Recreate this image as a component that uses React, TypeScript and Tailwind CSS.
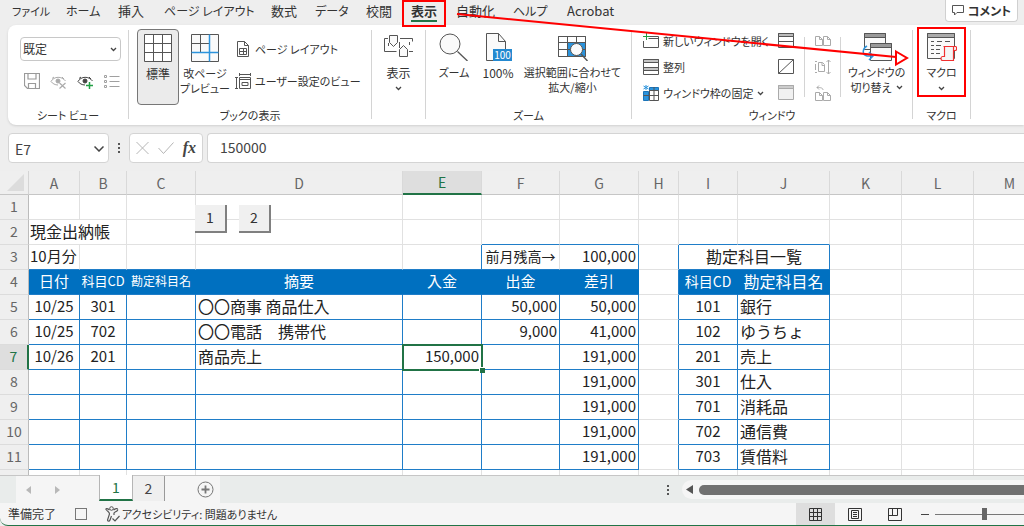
import type { ReactNode } from 'react';
import clsx from 'clsx';

interface Cell {
    text: string;
    className?: string;
    span?: number;
}

const menuTabs = [
    { label: 'ファイル', width: 'w-[54px] text-[11px]' },
    { label: 'ホーム', width: 'w-[52px] text-xs' },
    { label: '挿入', width: 'w-[46px] text-[13px]' },
    { label: 'ページ レイアウト', width: 'w-[107px] text-xs' },
    { label: '数式', width: 'w-[44px] text-[13px]' },
    { label: 'データ', width: 'w-[51px] text-xs' },
    { label: '校閲', width: 'w-[45px] text-[13px]' },
    { label: '表示', width: 'w-[45px] text-[13px]' },
    { label: '自動化', width: 'w-[57px] text-[13px]' },
    { label: 'ヘルプ', width: 'w-[54px] text-xs' },
    { label: 'Acrobat', width: 'w-[60px] text-[13px]' },
];

const columns = [
    { name: 'A', width: 'w-[51px]' },
    { name: 'B', width: 'w-[47px]' },
    { name: 'C', width: 'w-[69px]' },
    { name: 'D', width: 'w-[207px]' },
    { name: 'E', width: 'w-[79px]' },
    { name: 'F', width: 'w-[78px]' },
    { name: 'G', width: 'w-[79px]' },
    { name: 'H', width: 'w-[40px]' },
    { name: 'I', width: 'w-[59px]' },
    { name: 'J', width: 'w-[92px]' },
    { name: 'K', width: 'w-[72px]' },
    { name: 'L', width: 'w-[72px]' },
    { name: 'M', width: 'w-[72px]' },
];

const center = 'text-center text-[15px]';
const right = 'text-right text-[15px] pr-0.5';
const left = 'text-left text-base pl-0.5';
const head = 'text-center text-white text-[15px]';

const cells: Record<string, Cell> = {
    A2: { text: '現金出納帳', className: 'text-left text-base pl-px', span: 2 },
    A3: { text: '10月分', className: 'text-left text-[15px] pl-px' },
    F3: { text: '前月残高→', className: 'text-center text-sm' },
    G3: { text: '100,000', className: right },
    I3: { text: '勘定科目一覧', className: 'text-center text-base', span: 2 },
    A4: { text: '日付', className: head },
    B4: { text: '科目CD', className: 'text-center text-white text-[13px]' },
    C4: { text: '勘定科目名', className: 'text-center text-white text-xs' },
    D4: { text: '摘要', className: head },
    E4: { text: '入金', className: head },
    F4: { text: '出金', className: head },
    G4: { text: '差引', className: head },
    I4: { text: '科目CD', className: 'text-center text-white text-sm' },
    J4: { text: '勘定科目名', className: 'text-center text-white text-base' },
    A5: { text: '10/25', className: center },
    B5: { text: '301', className: center },
    D5: { text: '〇〇商事 商品仕入', className: left },
    F5: { text: '50,000', className: right },
    G5: { text: '50,000', className: right },
    A6: { text: '10/25', className: center },
    B6: { text: '702', className: center },
    D6: { text: '〇〇電話　携帯代', className: left },
    F6: { text: '9,000', className: right },
    G6: { text: '41,000', className: right },
    A7: { text: '10/26', className: center },
    B7: { text: '201', className: center },
    D7: { text: '商品売上', className: left },
    E7: { text: '150,000', className: right },
    G7: { text: '191,000', className: right },
    G8: { text: '191,000', className: right },
    G9: { text: '191,000', className: right },
    G10: { text: '191,000', className: right },
    G11: { text: '191,000', className: right },
};

const accounts = [
    ['101', '銀行'],
    ['102', 'ゆうちょ'],
    ['201', '売上'],
    ['301', '仕入'],
    ['701', '消耗品'],
    ['702', '通信費'],
    ['703', '賃借料'],
];

accounts.forEach(([code, name], i) => {
    cells[`I${i + 5}`] = { text: code, className: center };
    cells[`J${i + 5}`] = { text: name, className: left };
});

const inTables = (col: number) => col <= 6 || col === 8 || col === 9;

function cellBorder(row: number, col: number) {
    const rightBlue =
        (row >= 4 && row <= 11 && col <= 9) || (row === 3 && [4, 6, 7, 9].includes(col));
    const bottomBlue =
        (row >= 3 && row <= 11 && inTables(col)) || (row === 2 && [5, 6, 8, 9].includes(col));
    return clsx(
        rightBlue ? 'border-r-[#1f7dc8]' : 'border-r-[#e1e1e1]',
        bottomBlue ? 'border-b-[#1f7dc8]' : 'border-b-[#e1e1e1]',
    );
}

function Chevron({ className }: { className?: string }) {
    return (
        <svg width="7" height="5" viewBox="0 0 7 5" fill="none" stroke="#444" strokeWidth="1.3" className={clsx('shrink-0', className)}>
            <path d="M1 1l2.5 2.5L6 1" />
        </svg>
    );
}

function Icon({ w = 16, h = 16, color = '#555', className, children }: { w?: number; h?: number; color?: string; className?: string; children: ReactNode }) {
    return (
        <svg width={w} height={h} viewBox={`0 0 ${w} ${h}`} fill="none" stroke={color} className={clsx('shrink-0', className)}>
            {children}
        </svg>
    );
}

function Group({ label, width, children }: { label: string; width: string; children: ReactNode }) {
    return (
        <section className={clsx('flex shrink-0', width)}>
            <div className="flex min-w-0 grow flex-col">
                <div className="flex h-[76px]">{children}</div>
                <div className="h-5 text-center text-[11px] leading-5">{label}</div>
            </div>
            <div className="mb-1.5 mt-px w-px bg-[#d4d4d4]" />
        </section>
    );
}

function BigButton({ icon, lines, className, menu }: { icon: ReactNode; lines: string[]; className?: string; menu?: boolean }) {
    return (
        <button className={clsx('flex shrink-0 flex-col items-center gap-1 pt-1 leading-[15px]', className)}>
            {icon}
            <span className="flex flex-col items-center whitespace-nowrap">
                {lines.map((line) => (
                    <span key={line}>{line}</span>
                ))}
                {menu && <Chevron className="mt-1.5" />}
            </span>
        </button>
    );
}

function SmallButton({ icon, label, menu }: { icon: ReactNode; label: string; menu?: boolean }) {
    return (
        <button className="flex h-5 items-center gap-1 whitespace-nowrap text-[11px] leading-5">
            {icon}
            {label}
            {menu && <Chevron />}
        </button>
    );
}

function SheetViewGroup() {
    return (
        <Group label="シート ビュー" width="w-[121px]">
            <div className="flex grow flex-col gap-3 pl-3 pt-2">
                <div className="relative h-6 w-[101px]">
                    <select aria-label="シート ビュー" className="block h-full w-full appearance-none rounded border border-[#c8c8c8] bg-white pl-0.5 text-xs">
                        <option>既定</option>
                    </select>
                    <Chevron className="pointer-events-none absolute right-1 top-2.5" />
                </div>
                <div className="flex gap-2.5 pl-1">
                    <button aria-label="保持">
                        <Icon color="#9a9a9a">
                            <path d="M.5.5h15v15h-12l-3-3zM4 .5v5.500h8V.5M4.500 15.500v-5h7v5" strokeWidth="1.200" />
                        </Icon>
                    </button>
                    <button aria-label="終了">
                        <Icon w={17} color="#aaa">
                            <path d="M1 8.500C4 3 12 3 15.500 8M1 8.500c1.500 2 4 3.500 7 3.500M2 5.500l2-1.500M14 6l-2-2" />
                            <circle cx="8" cy="8" r="2" fill="#aaa" />
                            <path d="M9.500 10l6 5.500M15.500 10l-6 5.500" strokeWidth="1.200" />
                        </Icon>
                    </button>
                    <button aria-label="新規">
                        <Icon w={17} color="#444">
                            <path d="M1 8.500C4 3 12 3 15.500 8M1 8.500c1.500 2 4 3.500 7 3.500M2 5.500l2-1.500M14 6l-2-2" />
                            <circle cx="8" cy="8" r="2" fill="#444" />
                            <path d="M12.500 9v7M9 12.500h7" stroke="#22a045" strokeWidth="1.500" />
                        </Icon>
                    </button>
                    <button aria-label="オプション">
                        <Icon color="#a0a0a0">
                            <path d="M5.500 3.500h10M5.500 8.500h10M5.500 13.500h10" />
                            <path d="M.5 2.500h2v2h-2zM.5 7.500h2v2h-2zM.5 12.500h2v2h-2z" />
                        </Icon>
                    </button>
                </div>
            </div>
        </Group>
    );
}

function BookViewGroup() {
    return (
        <Group label="ブックの表示" width="w-[243px]">
            <div className="flex pl-2">
                <BigButton
                    className="w-[42px] rounded border border-[#777] bg-[#ebebeb] text-xs"
                    lines={['標準']}
                    icon={
                        <Icon w={28} h={28}>
                            <path d="M.5.5h27v27H.5z" fill="#fff" />
                            <path d="M9.500.5v27M18.500.5v27M.5 9.500h27M.5 18.500h27" />
                        </Icon>
                    }
                />
                <BigButton
                    className="w-[52px] border border-transparent text-[11px]"
                    lines={['改ページ', 'プレビュー']}
                    icon={
                        <Icon w={28} h={28}>
                            <path d="M.5.5h27v27H.5z" fill="#fafafa" />
                            <path d="M9.500.5v18M.5 9.500h18" />
                            <path d="M18.500.5v27M.5 18.500h27" stroke="#2b93dc" strokeWidth="1.500" />
                        </Icon>
                    }
                />
                <div className="flex flex-col gap-3 pl-1 pt-2.5">
                    <SmallButton
                        label="ページ レイアウト"
                        icon={
                            <Icon>
                                <path d="M2.500.5h7l4 4v11h-11zM9.500.5v4h4" />
                                <path d="M4.500 7.500h7v6h-7zM4.500 10.500h7M8.500 7.500v6" />
                            </Icon>
                        }
                    />
                    <SmallButton
                        label="ユーザー設定のビュー"
                        icon={
                            <Icon>
                                <path d="M4 1.500h12M4.500 0v3M15.500 0v3M1.500 4v12M0 4.500h3M0 15.500h3M4.500 4.500h11v11h-11zM4.500 6.500h11M7 9.500h6v3H7z" />
                            </Icon>
                        }
                    />
                </div>
            </div>
        </Group>
    );
}

function WindowGroup() {
    return (
        <Group label="ウィンドウ" width="w-[281px]">
            <div className="flex w-[132px] flex-col gap-1.5 pl-[11px] pt-0.5">
                <SmallButton
                    label="新しいウィンドウを開く"
                    icon={
                        <Icon>
                            <path d="M5.500 3.500h10v11H.5V8M5.500 5.500h10" />
                            <path d="M3.500 0v7M0 3.500h7" stroke="#22a045" />
                        </Icon>
                    }
                />
                <SmallButton
                    label="整列"
                    icon={
                        <Icon>
                            <path d="M.5.5h15v15H.5z" />
                            <path d="M.5.5h15v3H.5zM.5 8.500h15v3H.5z" fill="#c4c4c4" />
                        </Icon>
                    }
                />
                <SmallButton
                    label="ウィンドウ枠の固定"
                    menu
                    icon={
                        <Icon>
                            <path d="M6.500 2.500h9v3h-9zM.5 6.500h5v9h-5z" fill="#2b93dc" stroke="#1b74b8" />
                            <path d="M6.500 5.500h9v10h-9zM11 2v14M.5 10.500h15" />
                            <path d="M3 0v5M.5 1l5 3M5.500 1l-5 3" stroke="#2b93dc" />
                        </Icon>
                    }
                />
            </div>
            <div className="flex w-10 flex-col items-end gap-2.5 pr-[10px] pt-1">
                <button aria-label="分割">
                    <Icon>
                        <path d="M.5.5h15v14H.5z" />
                        <path d="M.5.5h15v3H.5z" fill="#bbb" />
                        <path d="M.5 8.500h15" />
                    </Icon>
                </button>
                <button aria-label="表示しない">
                    <Icon>
                        <path d="M.5.5h15v14H.5zM.5 14.500L15.500.5" />
                    </Icon>
                </button>
                <button aria-label="再表示">
                    <Icon color="#aaa">
                        <path d="M.5.5h15v14H.5z" fill="#f1f1f1" />
                        <path d="M.5.5h15v3H.5z" fill="#ccc" />
                    </Icon>
                </button>
            </div>
            <div className="my-2 w-px bg-[#d4d4d4]" />
            <div className="flex w-[35px] flex-col items-center gap-2.5 pt-1">
                <button aria-label="並べて比較">
                    <Icon color="#aaa">
                        <path d="M.5 3.500h4l3 3v6h-7zM8.500 3.500h4l3 3v6h-7zM4.500 3.500v3h3M12.500 3.500v3h3" />
                    </Icon>
                </button>
                <button aria-label="同時にスクロール">
                    <Icon color="#aaa">
                        <path d="M3.500 3.500h4l2 2v7h-6zM7 3.500v3h2.500M13.500 1v14M11.500 3l2-2 2 2M11.500 13l2 2 2-2M0 2.500h2M.5 5v6M0 13.500h2" />
                    </Icon>
                </button>
                <button aria-label="ウィンドウの位置を元に戻す">
                    <Icon color="#aaa">
                        <path d="M.5 7.500h4l3 3v5h-7zM8.500 7.500h4l3 3v5h-7zM4.500 7.500v3h3M12.500 7.500v3h3M8 5c0-2-2-2.500-6-2.500M4 .5l-2 2 2 2" />
                    </Icon>
                </button>
            </div>
            <div className="my-2 w-px bg-[#d4d4d4]" />
            <button className="flex grow flex-col items-center gap-1 pt-1 text-[11px] leading-[15px]">
                <Icon w={30} h={28}>
                    <path d="M2.500.5h21v16h-21z" fill="#fafafa" />
                    <path d="M2.500.5h21v4h-21z" fill="#999" />
                    <path d="M8.500 10.500h21v17h-21z" fill="#fafafa" />
                    <path d="M8.500 10.500h21v4h-21z" fill="#999" />
                    <path d="M5 13c-5 3-5 9 0 10h5M7 19l4 4-4 4" stroke="#2b93dc" strokeWidth="1.500" />
                </Icon>
                <span className="flex flex-col items-center whitespace-nowrap">
                    <span>ウィンドウの</span>
                    <span className="flex items-center gap-1">
                        切り替え <Chevron />
                    </span>
                </span>
            </button>
        </Group>
    );
}

function Ribbon() {
    return (
        <div className="ml-2 flex h-[100px] shrink-0 overflow-hidden rounded-l-lg bg-white pt-1 shadow">
            <SheetViewGroup />
            <BookViewGroup />
            <Group label="" width="w-[54px]">
                <BigButton
                    className="w-full text-xs"
                    lines={['表示']}
                    menu
                    icon={
                        <Icon w={29} h={28}>
                            <path d="M4 5.500H.5v13h12M16 5.500h12.500v3M25 18.500h4M15.500 9v6M25.500 9v3M4.500 10v3" />
                            <path d="M5.500 2.500h8v7l-4 4-4-4z" fill="#fafafa" />
                            <path d="M15.500 23.500h8v-7l-4-4-4 4z" fill="#fafafa" />
                        </Icon>
                    }
                />
            </Group>
            <Group label="ズーム" width="w-[206px]">
                <BigButton
                    className="w-[56px] text-[11px]"
                    lines={['ズーム']}
                    icon={
                        <Icon w={30} h={28}>
                            <circle cx="11" cy="11" r="10" fill="#fafafa" />
                            <path d="M18.500 18.500l10 9.500" strokeWidth="1.300" />
                        </Icon>
                    }
                />
                <BigButton
                    className="w-[32px] text-xs"
                    lines={['100%']}
                    icon={
                        <Icon w={28} h={28}>
                            <path d="M2.500.5h12l7 8v19h-19z" fill="#fafafa" />
                            <path d="M14.500.5v8h7" />
                            <path d="M9 16h19v12H9z" fill="#2489d0" stroke="none" />
                            <text x="18.500" y="26" textAnchor="middle" fontSize="10" fill="#fff" stroke="none">100</text>
                        </Icon>
                    }
                />
                <BigButton
                    className="grow text-[11px]"
                    lines={['選択範囲に合わせて', '拡大/縮小']}
                    icon={
                        <Icon w={30} h={28}>
                            <path d="M.5 3.500h27v20H.5z" fill="#fff" />
                            <path d="M10 10h17v13H10z" fill="#2b93dc" stroke="none" />
                            <path d="M.5 3.500h27v20H.5zM.5 9.500h27M.5 16.500h27M9.500 3.500v20M18.500 3.500v20" />
                            <circle cx="18.500" cy="16.500" r="6" fill="#fafafa" />
                            <path d="M23 21l6.500 7" strokeWidth="1.400" />
                        </Icon>
                    }
                />
            </Group>
            <WindowGroup />
            <Group label="マクロ" width="w-[58px]">
                <div className="flex grow px-1">
                    <BigButton
                        className="-mt-0.5 h-[70px] w-full border-2 border-[#f00] text-[11px]"
                        lines={['マクロ']}
                        menu
                        icon={
                            <Icon w={30} h={28}>
                                <path d="M.5.5h27v25H.5z" fill="#fafafa" />
                                <path d="M.5.5h27v4H.5z" fill="#aaa" />
                                <path d="M4 8.500h3M10 8.500h5M18 8.500h5M4 12.500h3M9 12.500h5M4 16.500h3M9 16.500h4M4 20.500h3M9 20.500h4" />
                                <path d="M16.500 13.500h12c1.500 0 1.500 4 0 4h-2v10h-11c-2 0-2-4 0-4h2v-10zM26.500 14v4" fill="#f5f5f5" stroke="#f03030" strokeWidth="1.200" />
                            </Icon>
                        }
                    />
                </div>
            </Group>
        </div>
    );
}

function FormulaBar() {
    return (
        <div className="flex h-[30px] shrink-0 items-stretch pl-2 text-sm text-[#444]">
            <div className="relative w-[101px] rounded border border-[#d4d4d4] bg-white">
                <select aria-label="名前ボックス" className="h-full w-full appearance-none bg-transparent pl-1.5 pt-0.5">
                    <option>E7</option>
                </select>
                <svg width="10" height="6" viewBox="0 0 10 6" fill="none" stroke="#444" strokeWidth="1.500" className="pointer-events-none absolute right-1 top-3">
                    <path d="M.5.5L5 5 9.500.5" />
                </svg>
            </div>
            <div className="flex w-5 items-center justify-center">
                <Icon w={2} h={12}>
                    <path d="M1 1v2M1 5v2M1 9v2" strokeWidth="2" />
                </Icon>
            </div>
            <div className="flex w-[74px] items-center justify-between rounded border border-[#d4d4d4] bg-white px-1.5">
                <button aria-label="キャンセル">
                    <Icon w={13} h={14} color="#b5b5b5">
                        <path d="M.5 1l12 12M12.500 1l-12 12" />
                    </Icon>
                </button>
                <button aria-label="入力">
                    <Icon w={16} h={14} color="#b5b5b5">
                        <path d="M.5 7l5 5.500L15.500 1.500" />
                    </Icon>
                </button>
                <button className="font-['Liberation_Serif',serif] text-base font-bold italic leading-5">fx</button>
            </div>
            <input aria-label="数式バー" defaultValue="150000" className="ml-1 min-w-0 grow rounded-l border border-r-0 border-[#d4d4d4] bg-white pb-0.5 pl-3" />
        </div>
    );
}

function Sheet() {
    const rows = Array.from({ length: 12 }, (_, i) => i + 1);

    return (
        <div className="relative mt-2 min-h-0 grow overflow-hidden bg-white">
            <table className="w-[1046px] table-fixed border-separate border-spacing-0">
                <colgroup>
                    <col className="w-[29px]" />
                    {columns.map((c) => (
                        <col key={c.name} className={c.width} />
                    ))}
                </colgroup>
                <thead>
                    <tr className="h-6 text-sm leading-5 text-[#666]">
                        <th className="border-b border-r border-b-[#c6c6c6] border-r-[#d4d4d4] bg-[#efefef] p-0">
                            <svg width="17" height="17" viewBox="0 0 17 17" className="ml-auto mr-1">
                                <path d="M17 0v17H0z" fill="#dcdcdc" />
                            </svg>
                        </th>
                        {columns.map((c) => (
                            <th
                                key={c.name}
                                className={clsx(
                                    'border-b border-r border-r-[#d9d9d9] p-0 font-normal',
                                    c.name === 'E' ? 'border-b-2 border-b-[#217346] bg-[#dedede] text-[#217346]' : 'border-b-[#c6c6c6] bg-[#efefef]',
                                )}
                            >
                                {c.name}
                            </th>
                        ))}
                    </tr>
                </thead>
                <tbody>
                    {rows.map((row) => (
                        <tr key={row} className="h-[25px]">
                            <th
                                className={clsx(
                                    'border-b border-r border-b-[#dcdcdc] p-0 pb-0.5 text-center text-sm font-normal leading-5',
                                    row === 7 ? 'border-r-2 border-r-[#217346] bg-[#dedede] text-[#217346]' : 'border-r-[#bbb] bg-[#efefef] text-[#666]',
                                )}
                            >
                                {row}
                            </th>
                            {columns.map((c, i) => {
                                const cell = cells[c.name + row];
                                const before = i > 0 ? cells[columns[i - 1].name + row] : undefined;
                                if (before?.span) return null;
                                const selected = c.name === 'E' && row === 7;
                                return (
                                    <td
                                        key={c.name}
                                        colSpan={cell?.span}
                                        className={clsx(
                                            'whitespace-nowrap border-b border-r p-0 pb-0.5 leading-5',
                                            row !== 4 && 'text-[#222]',
                                            cellBorder(row, i + (cell?.span ?? 1) - 1),
                                            row === 4 && inTables(i) && 'border-r-[#0070c0] bg-[#0070c0]',
                                            selected && 'relative outline-2 -outline-offset-1 outline-[#217346]',
                                            cell?.className,
                                        )}
                                    >
                                        {cell?.text}
                                        {selected && <span className="absolute -bottom-1 -right-1 size-1.5 border-l border-t border-white bg-[#217346]" />}
                                    </td>
                                );
                            })}
                        </tr>
                    ))}
                </tbody>
            </table>
            {/* macro buttons floating over the sheet */}
            <div className="absolute left-[195px] top-[34px] flex gap-3">
                {['1', '2'].map((n) => (
                    <button key={n} className="h-7 w-8 border-b-2 border-r-2 border-[#808080] bg-[#f0f0f0] pb-0.5 text-sm text-[#333]">
                        {n}
                    </button>
                ))}
            </div>
        </div>
    );
}

function SheetTabs() {
    return (
        <div className="flex h-7 shrink-0 border-t border-[#c6c6c6] bg-[#e9eceb] pl-4 text-sm">
            <div className="flex w-[204px] bg-[#f5f5f5]">
                <div className="flex w-[83px] items-center gap-6 pl-2.5">
                    <button aria-label="前のシート">
                        <Icon w={5} h={8}>
                            <path d="M5 0v8L0 4z" fill="#b8b8b8" stroke="none" />
                        </Icon>
                    </button>
                    <button aria-label="次のシート">
                        <Icon w={5} h={8}>
                            <path d="M0 0v8l5-4z" fill="#b8b8b8" stroke="none" />
                        </Icon>
                    </button>
                </div>
                <button className="-mt-px mb-0.5 w-[34px] border-x border-b-2 border-x-[#b5b5b5] border-b-[#217346] bg-white text-[#217346]">1</button>
                <button className="mb-0.5 w-8 border-r border-[#999] bg-[#efefef] pb-0.5 text-[#444]">2</button>
                <button aria-label="新しいシート" className="ml-8">
                    <Icon w={17} h={17} color="#777">
                        <circle cx="8.500" cy="8.500" r="7.500" />
                        <path d="M8.500 4.500v8M4.500 8.500h8" strokeWidth="1.800" />
                    </Icon>
                </button>
            </div>
            <div className="flex w-[462px] items-center justify-end pr-[13px]">
                <Icon w={2} h={12}>
                    <path d="M1 1v2M1 5v2M1 9v2" strokeWidth="2" />
                </Icon>
            </div>
            <div className="my-1 flex grow items-center gap-1.5 rounded-l-full bg-[#f5f5f5] pl-1">
                <Icon w={7} h={9}>
                    <path d="M7 0v9L0 4.500z" fill="#555" stroke="none" />
                </Icon>
                <div className="h-2.5 grow rounded-l-full bg-[#707070]" />
            </div>
        </div>
    );
}

function StatusBar() {
    return (
        <div className="flex h-[23px] shrink-0 items-center rounded-bl-lg border-b border-[#217346] bg-[#f5f5f5] pl-2 text-xs text-[#333]">
            <span className="w-[67px]">準備完了</span>
            <button aria-label="マクロの記録" className="mr-[18px] size-3 border border-[#777]" />
            <button className="flex items-center gap-0.5 text-[11px]">
                <Icon w={15} h={16}>
                    <circle cx="6.500" cy="2.500" r="1.800" />
                    <path d="M1 3.500C3 6 4.500 5.500 4.500 8L2.500 14c0 1.500 2 1.500 2.500 0L6.500 10M12.500 3.500c1 1.500-3.500 2.500-3.500 3.500v2M1 3.500C.5 2 3 2.500 4.500 4M12.500 3.500C13 2 10 2.500 8.500 4M7.500 12.500l2.500 2.500 4.500-5" strokeWidth="1.200" />
                </Icon>
                アクセシビリティ: 問題ありません
            </button>
            <div className="ml-auto flex h-full items-center">
                <button aria-label="標準" className="flex h-full w-[39px] items-center justify-center bg-[#dedede]">
                    <Icon w={13} h={13} color="#333">
                        <path d="M.5.5h12v12H.5zM4.500.5v12M8.500.5v12M.5 4.500h12M.5 8.500h12" />
                    </Icon>
                </button>
                <button aria-label="ページ レイアウト" className="flex h-full w-10 items-center justify-center">
                    <Icon w={14} h={13} color="#333">
                        <path d="M.5.5h13v12H.5zM3.500 2.500h7v8h-7zM5 4.500h4M5 6.500h4M5 8.500h4" />
                    </Icon>
                </button>
                <button aria-label="改ページ プレビュー" className="flex h-full w-10 items-center justify-center">
                    <Icon w={14} h={13} color="#333">
                        <path d="M.5.5h13v12H.5zM4.500.5v7M9.500.5v7M.5 7.500h9" />
                    </Icon>
                </button>
                <button aria-label="縮小" className="ml-1.5 mr-1.5 h-px w-2 bg-[#444]" />
                <input
                    type="range"
                    aria-label="ズーム"
                    defaultValue="56"
                    className="h-4 w-[89px] appearance-none bg-[linear-gradient(#777,#777)] bg-[length:100%_1px] bg-center bg-no-repeat [&::-webkit-slider-thumb]:h-3 [&::-webkit-slider-thumb]:w-[5px] [&::-webkit-slider-thumb]:appearance-none [&::-webkit-slider-thumb]:bg-[#666]"
                />
            </div>
        </div>
    );
}

export default function App() {
    return (
        <div className="relative flex h-screen flex-col overflow-hidden bg-[#eee] font-['Noto_Sans_CJK_JP',sans-serif] text-[#333] [&_button]:[font-feature-settings:'palt'] [&_section]:[font-feature-settings:'palt']">
            <nav className="relative z-10 flex h-[25px] shrink-0 pl-3">
                {menuTabs.map((tab) => (
                    <div key={tab.label} className={clsx('shrink-0 leading-[22px]', tab.width)}>
                        {tab.label === '表示' ? (
                            <button className="-ml-[9px] flex h-[27px] w-11 justify-center border-2 border-[#f00] font-bold">
                                <span className="h-[20px] border-b-2 border-[#217346] leading-[18px]">{tab.label}</span>
                            </button>
                        ) : (
                            <button className="block whitespace-nowrap">{tab.label}</button>
                        )}
                    </div>
                ))}
                <button className="ml-auto mr-1.5 flex h-[22px] w-[73px] shrink-0 items-center justify-center gap-1 rounded-b border border-t-0 border-[#d0d0d0] bg-white text-xs font-bold">
                    <Icon w={12} h={11}>
                        <path d="M.5.5h11v7H5l-2.500 2.500V7.500h-2z" />
                    </Icon>
                    コメント
                </button>
            </nav>
            <Ribbon />
            <div className="h-2 shrink-0" />
            <FormulaBar />
            <Sheet />
            <SheetTabs />
            <StatusBar />
            {/* red guide arrow from the tab to the macro button */}
            <svg width="460" height="60" viewBox="0 0 460 60" fill="none" stroke="#f00" strokeWidth="2" className="pointer-events-none absolute left-[452px] top-[8px] z-20">
                <path d="M5 6l439 43" />
                <path d="M444 43.500l11 6.500-11 6.500z" fill="#fff" />
            </svg>
        </div>
    );
}
